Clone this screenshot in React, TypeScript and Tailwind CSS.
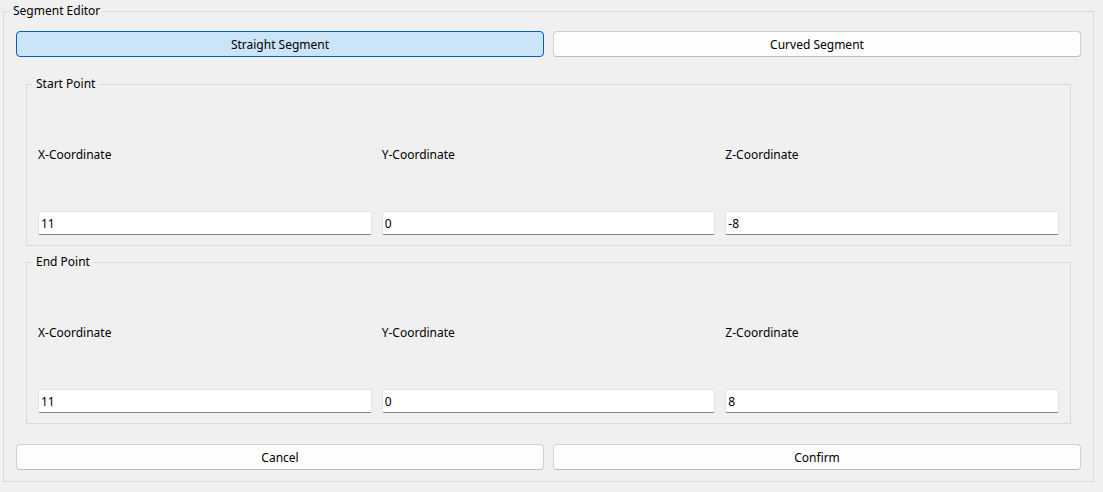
const font = { fontFamily: '"Noto Sans", "Open Sans", sans-serif' };

type PointGroupProps = {
  title: string;
  x: string;
  y: string;
  z: string;
  className?: string;
};

const CoordField = ({ label, value }: { label: string; value: string }) => (
  <div className="flex flex-col">
    <label className="mt-[55px] h-4 text-[12px] leading-4 text-black">{label}</label>
    <input
      defaultValue={value}
      className="mt-[48px] h-6 w-full rounded-[2px] border border-[#e4e4e4] border-b-[#858585] bg-white px-[2px] text-[12px] text-black outline-none"
    />
  </div>
);

const PointGroup = ({ title, x, y, z, className }: PointGroupProps) => (
  <fieldset className={`mx-[10px] border border-[#dadada] px-[11px] pb-[10px] ${className ?? ''}`}>
    <legend className="ml-[-6px] px-[4px] text-[12px] leading-4 text-black">{title}</legend>
    <div className="grid grid-cols-3 gap-x-[10px]">
      <CoordField label="X-Coordinate" value={x} />
      <CoordField label="Y-Coordinate" value={y} />
      <CoordField label="Z-Coordinate" value={z} />
    </div>
  </fieldset>
);

const Button = ({ children, active }: { children: string; active?: boolean }) => (
  <button
    type="button"
    className={
      active
        ? 'h-[26px] rounded-[4px] border border-[#005fb8] bg-[#cce4f7] pt-px text-[12px] text-black'
        : 'h-[26px] rounded-[4px] border border-[#d0d0d0] border-b-[#bcbcbc] bg-[#fdfdfd] pt-px text-[12px] text-black'
    }
  >
    {children}
  </button>
);

export default function App() {
  return (
    <div className="h-[492px] w-[1103px] overflow-hidden bg-[#f0f0f0] pt-[3px] pl-[3px]" style={font}>
      <fieldset className="w-[1091px] border border-[#dadada] pl-[12px] pr-[12px] pb-[11px]">
        <legend className="ml-[-6px] px-[3px] text-[12px] leading-4 text-black">Segment Editor</legend>
        <div className="mt-[12px] grid grid-cols-[528px_528px] gap-x-[9px]">
          <Button active>Straight Segment</Button>
          <Button>Curved Segment</Button>
        </div>
        <PointGroup title="Start Point" x="11" y="0" z="-8" className="mt-[19px]" />
        <PointGroup title="End Point" x="11" y="0" z="8" className="mt-[8px]" />
        <div className="mt-[20px] grid grid-cols-[528px_528px] gap-x-[9px]">
          <Button>Cancel</Button>
          <Button>Confirm</Button>
        </div>
      </fieldset>
    </div>
  );
}
